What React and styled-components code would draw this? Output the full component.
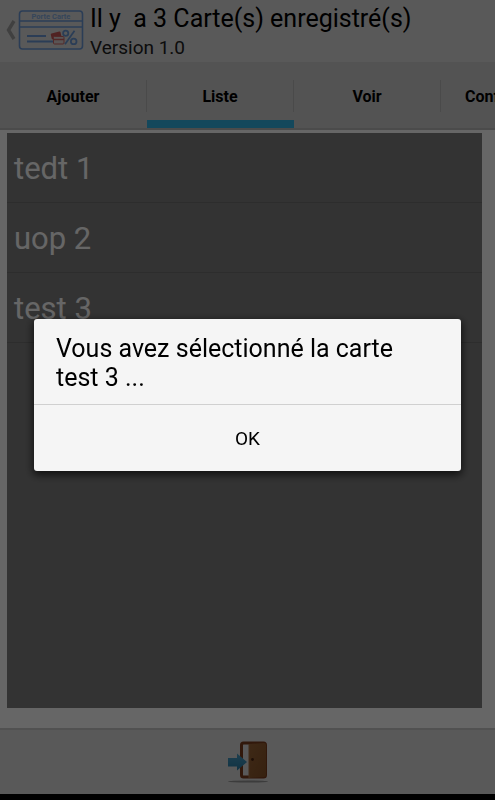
import React, { useState } from 'react';
import styled, { createGlobalStyle } from 'styled-components';

const GlobalStyle = createGlobalStyle`
    * {
        box-sizing: border-box;
    }
    body {
        margin: 0;
        background: white;
        font-family: Roboto, sans-serif;
        color: black;
    }
    button {
        font-family: inherit;
        color: inherit;
        border: none;
        background: none;
        padding: 0;
        cursor: pointer;
    }
`;

const Screen = styled.div`
    display: flex;
    flex-direction: column;
    min-height: 100vh;
    overflow: hidden;
`;

const ActionBar = styled.header`
    display: flex;
    align-items: center;
    gap: 6px;
    height: 62px;
    padding-left: 5px;
    background: #dedede;
`;

const HomeButton = styled.button`
    display: flex;
    align-items: center;
    flex-shrink: 0;

    & svg {
        display: block;
    }
`;

const Heading = styled.div`
    padding-top: 3px;
`;

const Title = styled.h1`
    margin: 0;
    font-weight: 400;
    font-size: 25px;
    line-height: 30px;
    white-space: pre;
`;

const Subtitle = styled.p`
    margin: 0;
    color: #222222;
    font-size: 19px;
    line-height: 28px;
`;

const TabBar = styled.nav`
    display: flex;
    height: 68px;
    background: #d0d0d0;
    border-bottom: 2px solid #bcbcbc;
    overflow: hidden;
`;

const Tab = styled.button`
    display: flex;
    align-items: center;
    flex: 0 0 147px;
    padding-top: 10px;
    border-bottom: 8px solid ${props => props.$active ? '#33b5e5' : 'transparent'};
    font-size: 16px;
    font-weight: 700;
`;

const TabLabel = styled.span`
    display: flex;
    align-items: center;
    justify-content: center;
    flex: 1;
    height: 32px;
    border-right: 1px solid #bababa;
`;

const Content = styled.main`
    display: flex;
    flex: 1;
    padding: 3px 13px 20px 7px;
`;

const CardList = styled.ul`
    flex: 1;
    margin: 0;
    padding: 0;
    list-style: none;
    background: #808080;
`;

const CardRow = styled.button`
    display: block;
    width: 100%;
    height: 70px;
    padding-top: 2px;
    padding-left: 7px;
    border-bottom: 1px solid #707070;
    color: white;
    font-size: 31px;
    text-align: left;
`;

const BottomBar = styled.footer`
    display: flex;
    justify-content: center;
    align-items: center;
    height: 72px;
    background: #dedede;
    border-top: 2px solid #cacaca;
    border-bottom: 6px solid black;

    & svg {
        display: block;
    }
`;

const Backdrop = styled.div`
    position: fixed;
    inset: 0;
    display: flex;
    align-items: center;
    justify-content: center;
    padding: 0 34px 10px;
    background: rgba(0, 0, 0, 0.6);
`;

const Dialog = styled.div`
    width: 100%;
    background: #f5f5f5;
    border-radius: 3px;
    box-shadow: 0 3px 8px 1px rgba(0, 0, 0, 0.7);
`;

const Message = styled.p`
    margin: 0;
    padding: 15px 22px 12px;
    font-size: 25px;
    line-height: 29px;
`;

const OkButton = styled.button`
    display: block;
    width: 100%;
    height: 67px;
    border-top: 1px solid #d0d0d0;
    font-size: 19px;
`;

const tabs = ['Ajouter', 'Liste', 'Voir', 'Configuration'];
const cards = ['tedt 1', 'uop 2', 'test 3'];

function BackIcon() {
    return (
        <svg width="12" height="24" viewBox="0 0 12 24" fill="none">
            <path d="M9 2 L3.5 11 L9 20" stroke="#a0a0a0" strokeWidth="3.4" />
        </svg>
    );
}

function CardIcon() {
    return (
        <svg width="67" height="42" viewBox="0 0 67 42" fill="none">
            <g stroke="#6b9ad8" strokeWidth="1.6">
                <rect x="2.5" y="1" width="63" height="38" rx="3" />
                <path d="M2.5 11 H65.5 M2.5 17 H65.5" />
                <path d="M10 26 H29 M10 31.5 H38" strokeWidth="1.8" />
            </g>
            <text x="34" y="8.5" fill="#86aee2" fontSize="7.5" fontWeight="700" textAnchor="middle">Porte Carte</text>
            <rect x="34" y="22.5" width="10" height="6" rx="1" fill="#c95555" transform="rotate(-14 39 25)" />
            <rect x="36.5" y="26.5" width="10.5" height="7.5" rx="1" fill="#e2d4d4" stroke="#cf6464" />
            <path d="M36.5 29.5 H47" stroke="#cf6464" strokeWidth="1.5" />
            <g stroke="#6b9ad8" strokeWidth="1.8">
                <circle cx="48.7" cy="23.2" r="2.6" />
                <circle cx="56.7" cy="31.4" r="2.8" />
                <path d="M57.5 20.8 L48 34.2" />
            </g>
        </svg>
    );
}

function ExitIcon() {
    return (
        <svg width="44" height="44" viewBox="0 0 44 44">
            <defs>
                <linearGradient id="door" x1="0" y1="0" x2="1" y2="1">
                    <stop offset="0" stopColor="#9c6638" />
                    <stop offset="1" stopColor="#875328" />
                </linearGradient>
                <linearGradient id="arrow" x1="0" y1="0" x2="0" y2="1">
                    <stop offset="0" stopColor="#4c9fc6" />
                    <stop offset="1" stopColor="#287fa9" />
                </linearGradient>
            </defs>
            <ellipse cx="22" cy="41.5" rx="20" ry="1" fill="#969696" />
            <rect x="15.5" y="3" width="24" height="34" rx="2" fill="#dedede" stroke="#7c3c1c" strokeWidth="3" />
            <path d="M23 4 L38 3 Q40 3 40 5 V35 Q40 37 38 37 L23 38 Z" fill="url(#door)" />
            <path d="M23 4 V38" stroke="#a87446" />
            <circle cx="26.5" cy="19.5" r="1.4" fill="#4a2411" />
            <path d="M2 18 H11 V13.5 L21 22 L11 30.5 V26.5 H2 Z" fill="url(#arrow)" />
        </svg>
    );
}

function App() {
    const [active, setActive] = useState('Liste');
    const [selected, setSelected] = useState('test 3');

    return (
        <>
            <GlobalStyle />
            <Screen>
                <ActionBar>
                    <HomeButton aria-label="Retour">
                        <BackIcon />
                        <CardIcon />
                    </HomeButton>
                    <Heading>
                        <Title>{'Il y  a 3 Carte(s) enregistré(s)'}</Title>
                        <Subtitle>Version 1.0</Subtitle>
                    </Heading>
                </ActionBar>
                <TabBar>
                    {tabs.map(tab => (
                        <Tab key={tab} $active={tab === active} onClick={() => setActive(tab)}>
                            <TabLabel>{tab}</TabLabel>
                        </Tab>
                    ))}
                </TabBar>
                <Content>
                    <CardList>
                        {cards.map(card => (
                            <li key={card}>
                                <CardRow onClick={() => setSelected(card)}>{card}</CardRow>
                            </li>
                        ))}
                    </CardList>
                </Content>
                <BottomBar>
                    <button aria-label="Quitter">
                        <ExitIcon />
                    </button>
                </BottomBar>
            </Screen>
            {selected && (
                <Backdrop>
                    <Dialog role="dialog" aria-modal="true" aria-labelledby="message">
                        <Message id="message">Vous avez sélectionné la carte {selected} ...</Message>
                        <OkButton onClick={() => setSelected(null)}>OK</OkButton>
                    </Dialog>
                </Backdrop>
            )}
        </>
    );
}

export default App;
